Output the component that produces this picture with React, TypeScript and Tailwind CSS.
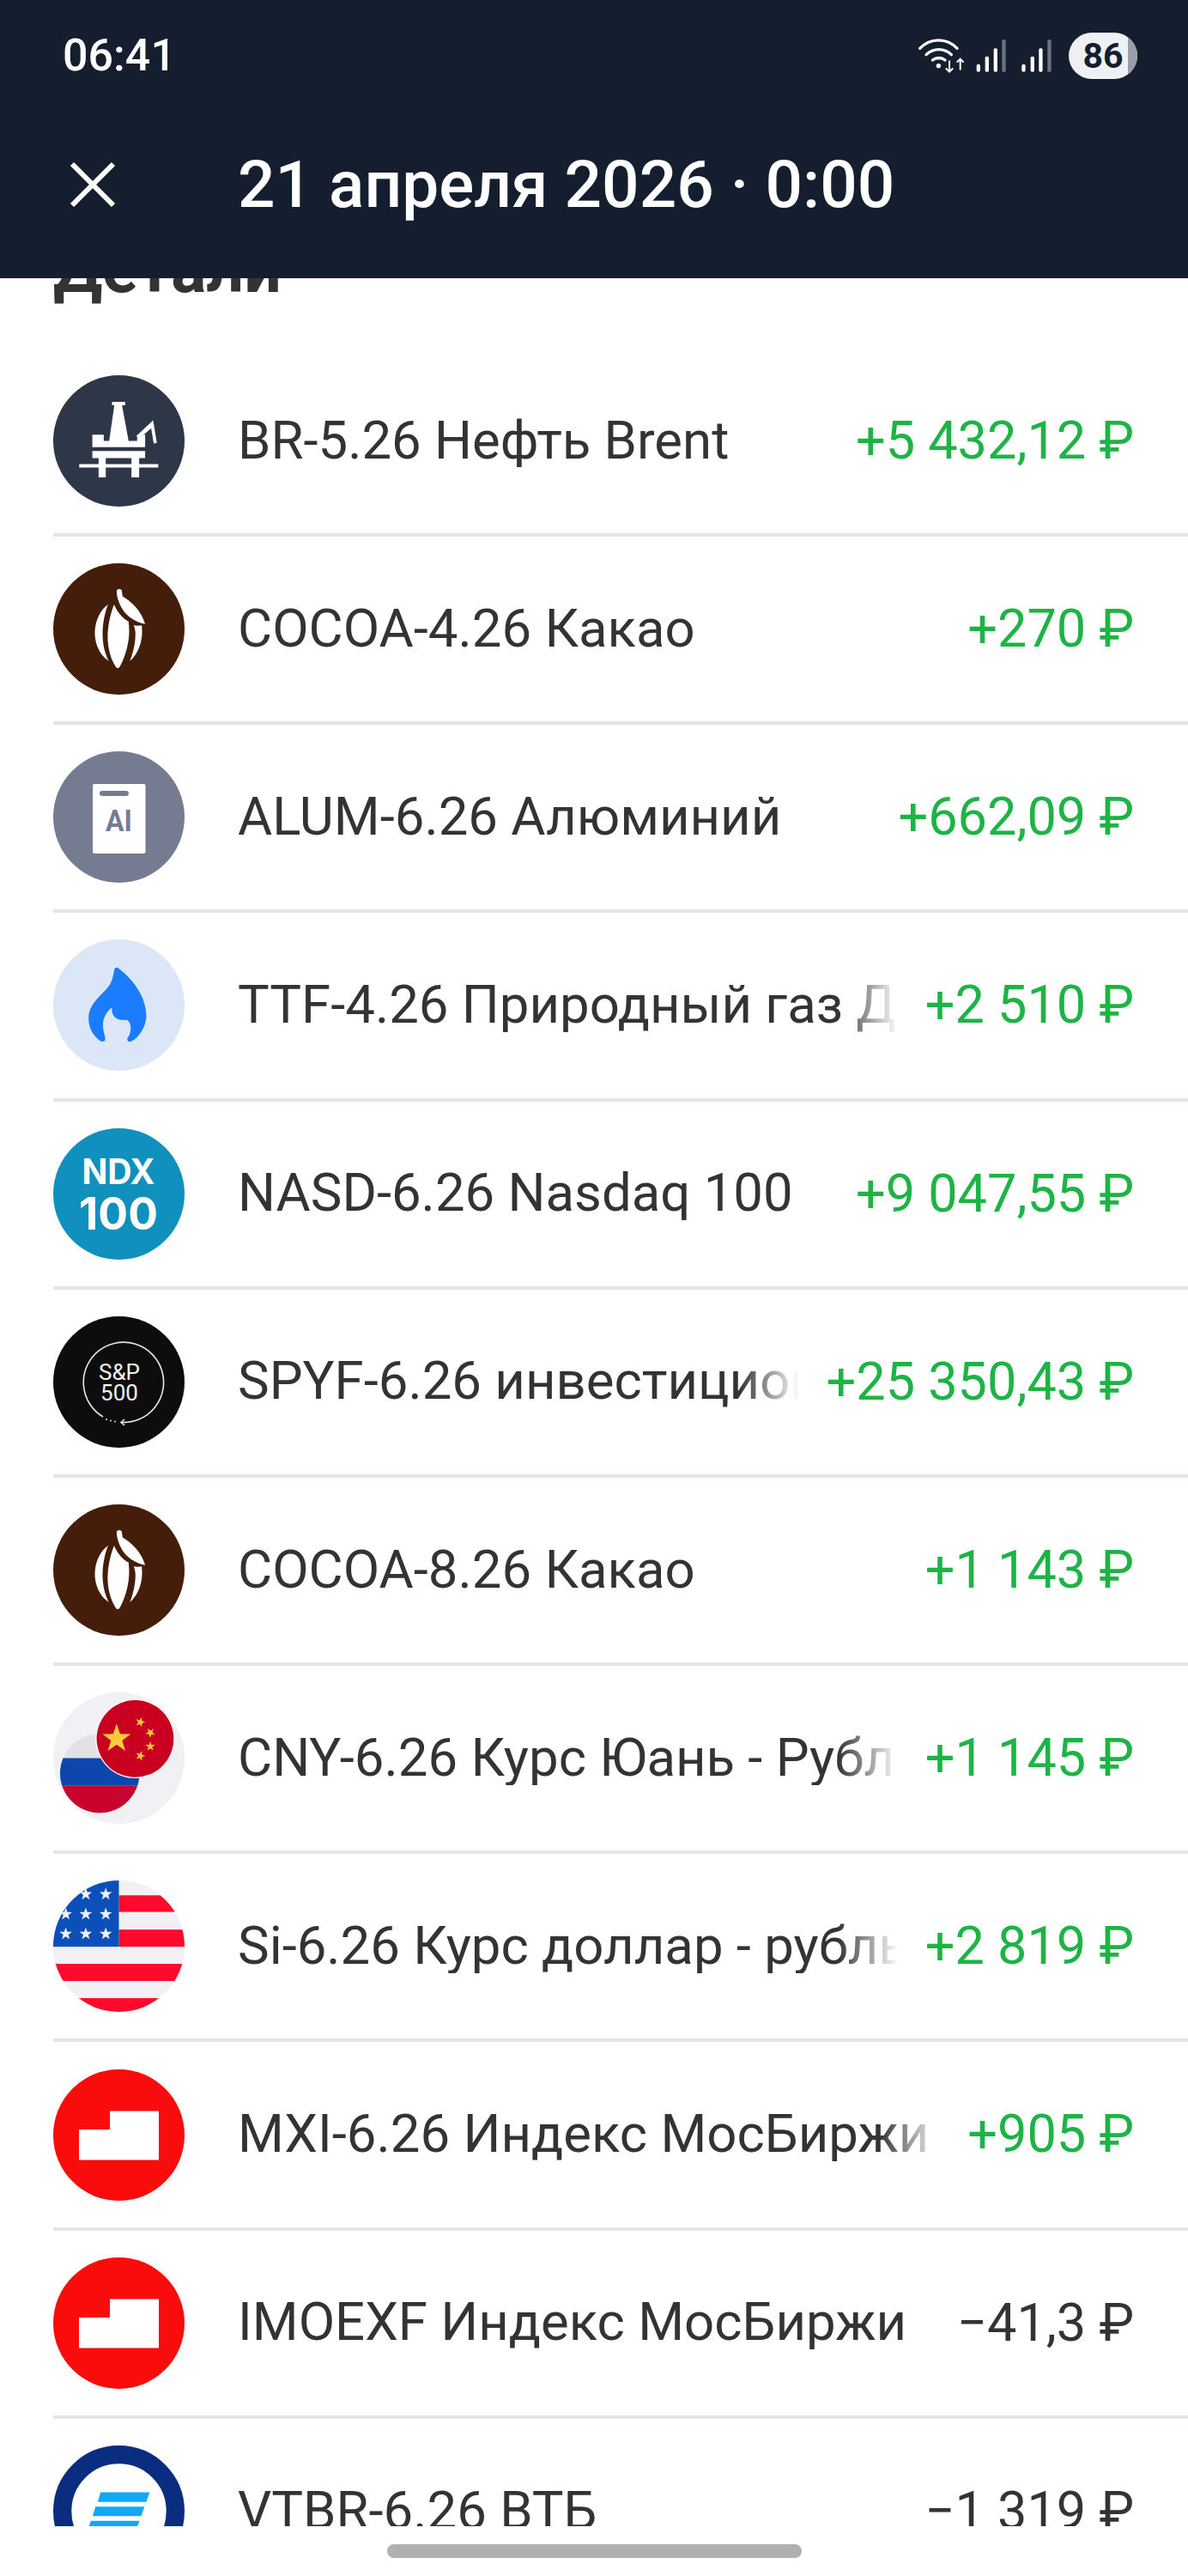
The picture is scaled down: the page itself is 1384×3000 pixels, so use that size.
import React from 'react';

const starPoints = (cx: number, cy: number, r: number, rot = 0) => {
  const pts: string[] = [];
  for (let i = 0; i < 10; i++) {
    const rad = i % 2 === 0 ? r : r * 0.4;
    const a = -Math.PI / 2 + (i * Math.PI) / 5 + rot;
    pts.push(`${cx + rad * Math.cos(a)},${cy + rad * Math.sin(a)}`);
  }
  return pts.join(' ');
};

const iconClass = 'h-[153px] w-[153px] shrink-0';

const BrentIcon = () => (
  <svg viewBox="66 50 460 460" className={iconClass}>
    <circle cx="296" cy="280" r="230" fill="#2e3748" />
    <g fill="#fff">
      <path d="M272 143h46v12h-11l23 125h30v-22h28v44H203v-44h40v22h19l18-125h-8z" />
      <path d="M358 262l58-54 13 79-11 2-9-53-44 38z" />
      <path d="M203 315h185v25h-21v21h67v12h-67v35h-27v-35h-90v35h-25v-35h-68v-12h68v-21h-22zM250 340v21h90v-21z" fillRule="evenodd" />
    </g>
  </svg>
);

const CocoaIcon = () => (
  <svg viewBox="66 18 460 460" className={iconClass}>
    <circle cx="296" cy="248" r="230" fill="#451d0b" />
    <g fill="#fff">
      <path d="M288 114c2-8 16-8 18-1l3 21c30 18 66 50 79 97-34-8-68-28-84-60-10-18-16-38-16-57z" />
      <path d="M279 162c12 28 30 48 51 60 3 28 3 52-3 80-6 30-18 62-28 78-4 6-10 6-14 0-16-24-26-58-28-92-2-44 8-90 22-126z" />
      <path d="M258 162c-14 36-22 82-18 126 2 26 10 52 20 72-30-20-50-60-48-104 2-40 20-76 46-94z" />
      <path d="M348 235c10 2 20 2 28 0 6 48-8 96-42 126 12-30 20-64 20-96 0-10-2-20-6-30z" />
    </g>
  </svg>
);

const AlumIcon = () => (
  <svg viewBox="0 0 153 153" className={iconClass}>
    <circle cx="76.5" cy="76.5" r="76.5" fill="#757c92" />
    <rect x="46" y="38" width="61.5" height="81" rx="2" fill="#fff" />
    <rect x="54" y="46" width="34" height="6" rx="3" fill="#757c92" />
    <text
      x="76.5"
      y="93"
      textAnchor="middle"
      fill="#757c92"
      textLength="31"
      lengthAdjust="spacingAndGlyphs"
      className="font-[family-name:Roboto] text-[35px] font-bold"
    >
      AI
    </text>
  </svg>
);

const GasIcon = () => (
  <svg viewBox="66 43 460 460" className={iconClass}>
    <circle cx="296" cy="273" r="230" fill="#dbe6f6" />
    <path
      fill="#1a7dff"
      d="M280 148c3-7 9-8 14-4 34 24 98 90 98 166 0 40-30 84-56 91-9 2-14-7-8-15 14-20 12-52-3-61-30 4-58-8-53-43-16 8-32 36-32 63 0 20 10 38 8 50-2 7-12 8-20 1-23-16-40-46-38-81 2-50 50-80 72-110 12-18 15-40 18-57z"
    />
  </svg>
);

const NdxIcon = () => (
  <svg viewBox="0 0 153 153" className={iconClass}>
    <circle cx="76.5" cy="76.5" r="76.5" fill="#0f90bd" />
    <g fill="#fff" textAnchor="middle" className="font-[family-name:Inter] font-bold">
      <text x="76" y="65" className="text-[41px]" textLength="85" lengthAdjust="spacingAndGlyphs">
        NDX
      </text>
      <text x="76" y="118" className="text-[52px]" textLength="92" lengthAdjust="spacingAndGlyphs">
        100
      </text>
    </g>
  </svg>
);

const SpIcon = () => (
  <svg viewBox="0 0 153 153" className={iconClass}>
    <circle cx="76.5" cy="76.5" r="76.5" fill="#0d0d0d" />
    <path d="M58 117A46.7 46.7 0 1 1 79 123.5" fill="none" stroke="#e6e6e6" strokeWidth="1.6" />
    <path d="M83 120l-4 3.5 4 3.5" fill="none" stroke="#e6e6e6" strokeWidth="1.6" />
    <g fill="#e6e6e6">
      <circle cx="62" cy="120" r="1" />
      <circle cx="67" cy="121.500" r="1" />
      <circle cx="72" cy="122.500" r="1" />
    </g>
    <g fill="#f2f2f2" textAnchor="middle" className="font-[family-name:Roboto] text-[26px] font-normal">
      <text x="77" y="74">S&amp;P</text>
      <text x="77" y="98">500</text>
    </g>
  </svg>
);

const CnyIcon = () => (
  <svg viewBox="66 35 460 460" className={iconClass}>
    <defs>
      <clipPath id="ru-clip">
        <circle cx="229" cy="318" r="139" />
      </clipPath>
    </defs>
    <circle cx="296" cy="265" r="230" fill="#f0f0f5" />
    <g clipPath="url(#ru-clip)">
      <rect x="80" y="170" width="300" height="95" fill="#e1e2e4" />
      <rect x="80" y="265" width="300" height="97" fill="#0d47ad" />
      <rect x="80" y="362" width="300" height="100" fill="#c8042e" />
    </g>
    <circle cx="353" cy="197" r="139" fill="#fff" />
    <circle cx="353" cy="197" r="135" fill="#c9001f" />
    <g fill="#fbc93c">
      <polygon points={starPoints(288, 197, 52)} />
      <polygon points={starPoints(371, 139, 18, 0.3)} />
      <polygon points={starPoints(406, 176, 18, 0.7)} />
      <polygon points={starPoints(406, 224, 18, 0)} />
      <polygon points={starPoints(371, 257, 18, 0.3)} />
    </g>
  </svg>
);

const UsdIcon = () => (
  <svg viewBox="66 30 460 460" className={iconClass}>
    <defs>
      <clipPath id="us-clip">
        <circle cx="296" cy="260" r="230" />
      </clipPath>
    </defs>
    <g clipPath="url(#us-clip)">
      <rect x="66" y="30" width="460" height="460" fill="#f0f0f5" />
      <g fill="#ff0a2c">
        <rect x="296" y="82" width="230" height="58" />
        <rect x="296" y="202" width="230" height="60" />
        <rect x="66" y="322" width="460" height="60" />
        <rect x="66" y="442" width="460" height="60" />
      </g>
      <rect x="66" y="30" width="230" height="232" fill="#0a50b8" />
      <g fill="#f0f0f5">
        {[78, 148, 217].flatMap((y) =>
          [110, 180, 250].map((x) => <polygon key={`${x}-${y}`} points={starPoints(x, y, 23)} />)
        )}
      </g>
    </g>
  </svg>
);

const MoexIcon = () => (
  <svg viewBox="0 0 153 153" className={iconClass}>
    <circle cx="76.5" cy="76.5" r="76.5" fill="#fa0b0c" />
    <path d="M66 48.500h57v57H30V70h36z" fill="#fff" />
  </svg>
);

const VtbIcon = () => (
  <svg viewBox="66 205 460 460" className={iconClass}>
    <circle cx="296" cy="435" r="198" fill="#fff" stroke="#0a2d80" strokeWidth="64" />
    <g fill="#0fa9f5">
      <path d="M232 369h172l-12 34H222z" />
      <path d="M214 419h172l-12 33H204z" />
      <path d="M198 469h170l-12 33H186z" />
    </g>
  </svg>
);

const rows = [
  { icon: <BrentIcon />, name: 'BR-5.26 Нефть Brent', value: '+5 432,12 ₽', up: true, fade: false },
  { icon: <CocoaIcon />, name: 'COCOA-4.26 Какао', value: '+270 ₽', up: true, fade: false },
  { icon: <AlumIcon />, name: 'ALUM-6.26 Алюминий', value: '+662,09 ₽', up: true, fade: false },
  { icon: <GasIcon />, name: 'TTF-4.26 Природный газ Дач', value: '+2 510 ₽', up: true, fade: true },
  { icon: <NdxIcon />, name: 'NASD-6.26 Nasdaq 100', value: '+9 047,55 ₽', up: true, fade: false },
  { icon: <SpIcon />, name: 'SPYF-6.26 инвестиционные паи', value: '+25 350,43 ₽', up: true, fade: true },
  { icon: <CocoaIcon />, name: 'COCOA-8.26 Какао', value: '+1 143 ₽', up: true, fade: false },
  { icon: <CnyIcon />, name: 'CNY-6.26 Курс Юань - Рубль', value: '+1 145 ₽', up: true, fade: true },
  { icon: <UsdIcon />, name: 'Si-6.26 Курс доллар - рубль', value: '+2 819 ₽', up: true, fade: true },
  { icon: <MoexIcon />, name: 'MXI-6.26 Индекс МосБиржи', value: '+905 ₽', up: true, fade: true },
  { icon: <MoexIcon />, name: 'IMOEXF Индекс МосБиржи', value: '−41,3 ₽', up: false, fade: false },
  { icon: <VtbIcon />, name: 'VTBR-6.26 ВТБ', value: '−1 319 ₽', up: false, fade: false },
];

const StatusIcons = () => (
  <svg viewBox="90 70 465 130" className="h-[43.300px] w-[155px]">
    <g fill="none" stroke="#fff" strokeLinecap="round">
      <path d="M95 110c36-38 94-38 130 0" strokeWidth="10" />
      <path d="M117 132c26-24 62-24 88 0" strokeWidth="10" />
      <path d="M139 151c12-10 32-10 44 0" strokeWidth="10" />
      <path d="M198 155v36M187 181l11 11 11-11M236 183v-36M226 157l10-10 10 10" strokeWidth="6" />
    </g>
    <circle cx="160" cy="171" r="8" fill="#fff" />
    <g fill="#fff">
      <rect x="293" y="165" width="13" height="27" rx="6" />
      <rect x="323" y="138" width="13" height="54" rx="5" />
      <rect x="353" y="110" width="13" height="82" rx="5" />
      <rect x="451" y="165" width="13" height="27" rx="6" />
      <rect x="482" y="138" width="13" height="54" rx="5" />
      <rect x="511" y="110" width="13" height="82" rx="5" />
    </g>
    <rect x="382" y="80" width="13" height="112" rx="3" fill="#6b7280" />
    <rect x="541" y="80" width="13" height="112" rx="3" fill="#6b7280" />
  </svg>
);

const App = () => {
  return (
    <div className="h-[3000px] w-[1384px] overflow-hidden bg-white font-[family-name:Roboto,sans-serif]">
      {/* Header */}
      <header className="relative z-10 h-[324px] bg-[#141e2e] text-white">
        <div className="flex h-[130px] items-center justify-between pl-[73px] pr-[59px]">
          <span className="text-[52px] font-medium leading-none">06:41</span>
          <div className="flex items-center gap-5">
            <StatusIcons />
            <div className="relative flex h-[54px] w-[80px] items-center justify-center overflow-hidden rounded-full bg-[#eef0f3]">
              <div className="absolute inset-y-0 right-0 w-[11px] bg-[#9a9ea6]" />
              <span className="relative text-[41px] font-bold leading-none text-[#141e2e]">86</span>
            </div>
          </div>
        </div>
        <div className="flex h-[170px] items-center pl-[81px]">
          <svg viewBox="0 0 54 54" className="h-[54px] w-[54px] shrink-0">
            <path d="M3 3l48 48M51 3L3 51" fill="none" stroke="#fff" strokeWidth="6" />
          </svg>
          <h1 className="ml-[142px] whitespace-nowrap text-[76.600px] font-medium leading-none">21 апреля 2026 · 0:00</h1>
        </div>
      </header>

      {/* Scrolled list */}
      <div className="h-[2618px] overflow-hidden">
        <h2 className="-mt-[50px] h-[131.800px] pl-[62px] text-[77px] font-bold leading-[80px] text-[#333]">Детали</h2>
        {rows.map((row, index) => (
          <div key={index} className="ml-[62px] flex h-[219.200px] items-center border-b-4 border-[#e5e5e5] pr-[63px]">
            {row.icon}
            <div
              className={`ml-[62px] mr-[32px] min-w-0 flex-1 overflow-hidden whitespace-nowrap text-[61.700px] leading-none text-[#333] ${
                row.fade ? '[mask-image:linear-gradient(to_right,black_calc(100%-70px),transparent)]' : ''
              }`}
            >
              {row.name}
            </div>
            <div className={`shrink-0 whitespace-nowrap text-[61.200px] leading-none ${row.up ? 'text-[#1db345]' : 'text-[#333]'}`}>
              {row.value}
            </div>
          </div>
        ))}
      </div>

      {/* Gesture bar */}
      <div className="mx-auto mt-[21px] h-4 w-[483px] rounded-full bg-[#b0b0b0]" />
    </div>
  );
};

export default App;
